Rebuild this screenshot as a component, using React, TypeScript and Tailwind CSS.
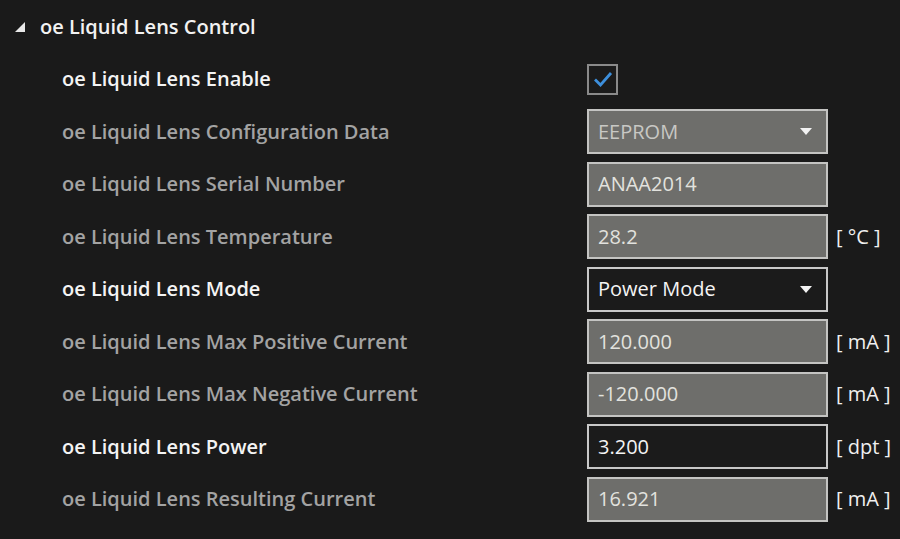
import React from "react";

type Row = {
  label: string;
  bold?: boolean;
  kind: "check" | "select" | "text";
  value?: string;
  disabled?: boolean;
  unit?: string;
};

const rows: Row[] = [
  { label: "oe Liquid Lens Enable", bold: true, kind: "check" },
  { label: "oe Liquid Lens Configuration Data", kind: "select", value: "EEPROM", disabled: true },
  { label: "oe Liquid Lens Serial Number", kind: "text", value: "ANAA2014", disabled: true },
  { label: "oe Liquid Lens Temperature", kind: "text", value: "28.2", disabled: true, unit: "[ °C ]" },
  { label: "oe Liquid Lens Mode", bold: true, kind: "select", value: "Power Mode" },
  { label: "oe Liquid Lens Max Positive Current", kind: "text", value: "120.000", disabled: true, unit: "[ mA ]" },
  { label: "oe Liquid Lens Max Negative Current", kind: "text", value: "-120.000", disabled: true, unit: "[ mA ]" },
  { label: "oe Liquid Lens Power", bold: true, kind: "text", value: "3.200", unit: "[ dpt ]" },
  { label: "oe Liquid Lens Resulting Current", kind: "text", value: "16.921", disabled: true, unit: "[ mA ]" },
];

function Arrow() {
  return (
    <svg width="12" height="7" viewBox="0 0 12 7" className="shrink-0">
      <polygon points="0,0 12,0 6,7" fill="#f2f2f2" />
    </svg>
  );
}

function Control({ row }: { row: Row }) {
  if (row.kind === "check") {
    return (
      <div className="w-[31px] h-[31px] border-2 border-[#8a8a8a] bg-[#1b1b1b] flex items-center justify-center">
        <svg width="20" height="16" viewBox="0 0 20 16">
          <path d="M2 8.5 L7.5 14 L18 2" fill="none" stroke="#3d8fdc" strokeWidth="2.8" />
        </svg>
      </div>
    );
  }
  const box = row.disabled
    ? "bg-[#6e6e6b] border-[#c4c4c2] text-[#e2e2de]"
    : "bg-[#1b1b1b] border-[#c8c8c8] text-[#f4f4f4]";
  return (
    <div
      className={`w-[241px] h-[45px] border-2 ${box} flex items-center justify-between pl-[9px] pr-[14px] text-[20px]`}
    >
      <span className={row.disabled && row.kind === "select" ? "text-[#c8c8c4]" : ""}>{row.value}</span>
      {row.kind === "select" && <Arrow />}
    </div>
  );
}

export default function App() {
  return (
    <div
      className="w-[900px] h-[539px] bg-[#1a1a1a] overflow-hidden"
      style={{ fontFamily: '"Open Sans", "Noto Sans", sans-serif' }}
    >
      <div className="h-[53px] flex items-center pl-[15px]">
        <svg width="10" height="10" viewBox="0 0 10 10" className="mr-[15px] mt-[1px]">
          <polygon points="10,0 10,10 0,10" fill="#e8e8e8" />
        </svg>
        <span className="text-[20px] font-semibold text-[#f2f2f2]">oe Liquid Lens Control</span>
      </div>
      <div className="flex flex-col">
        {rows.map((r, i) => (
          <div key={i} className="h-[52.5px] flex items-center">
            <div
              className={`w-[587px] pl-[62px] text-[20px] font-semibold ${
                r.bold ? "text-[#f4f4f4]" : "text-[#a3a3a3]"
              }`}
            >
              {r.label}
            </div>
            <Control row={r} />
            {r.unit && (
              <span className="ml-[8px] text-[20px] text-[#f0f0f0] whitespace-pre">{r.unit}</span>
            )}
          </div>
        ))}
      </div>
    </div>
  );
}
